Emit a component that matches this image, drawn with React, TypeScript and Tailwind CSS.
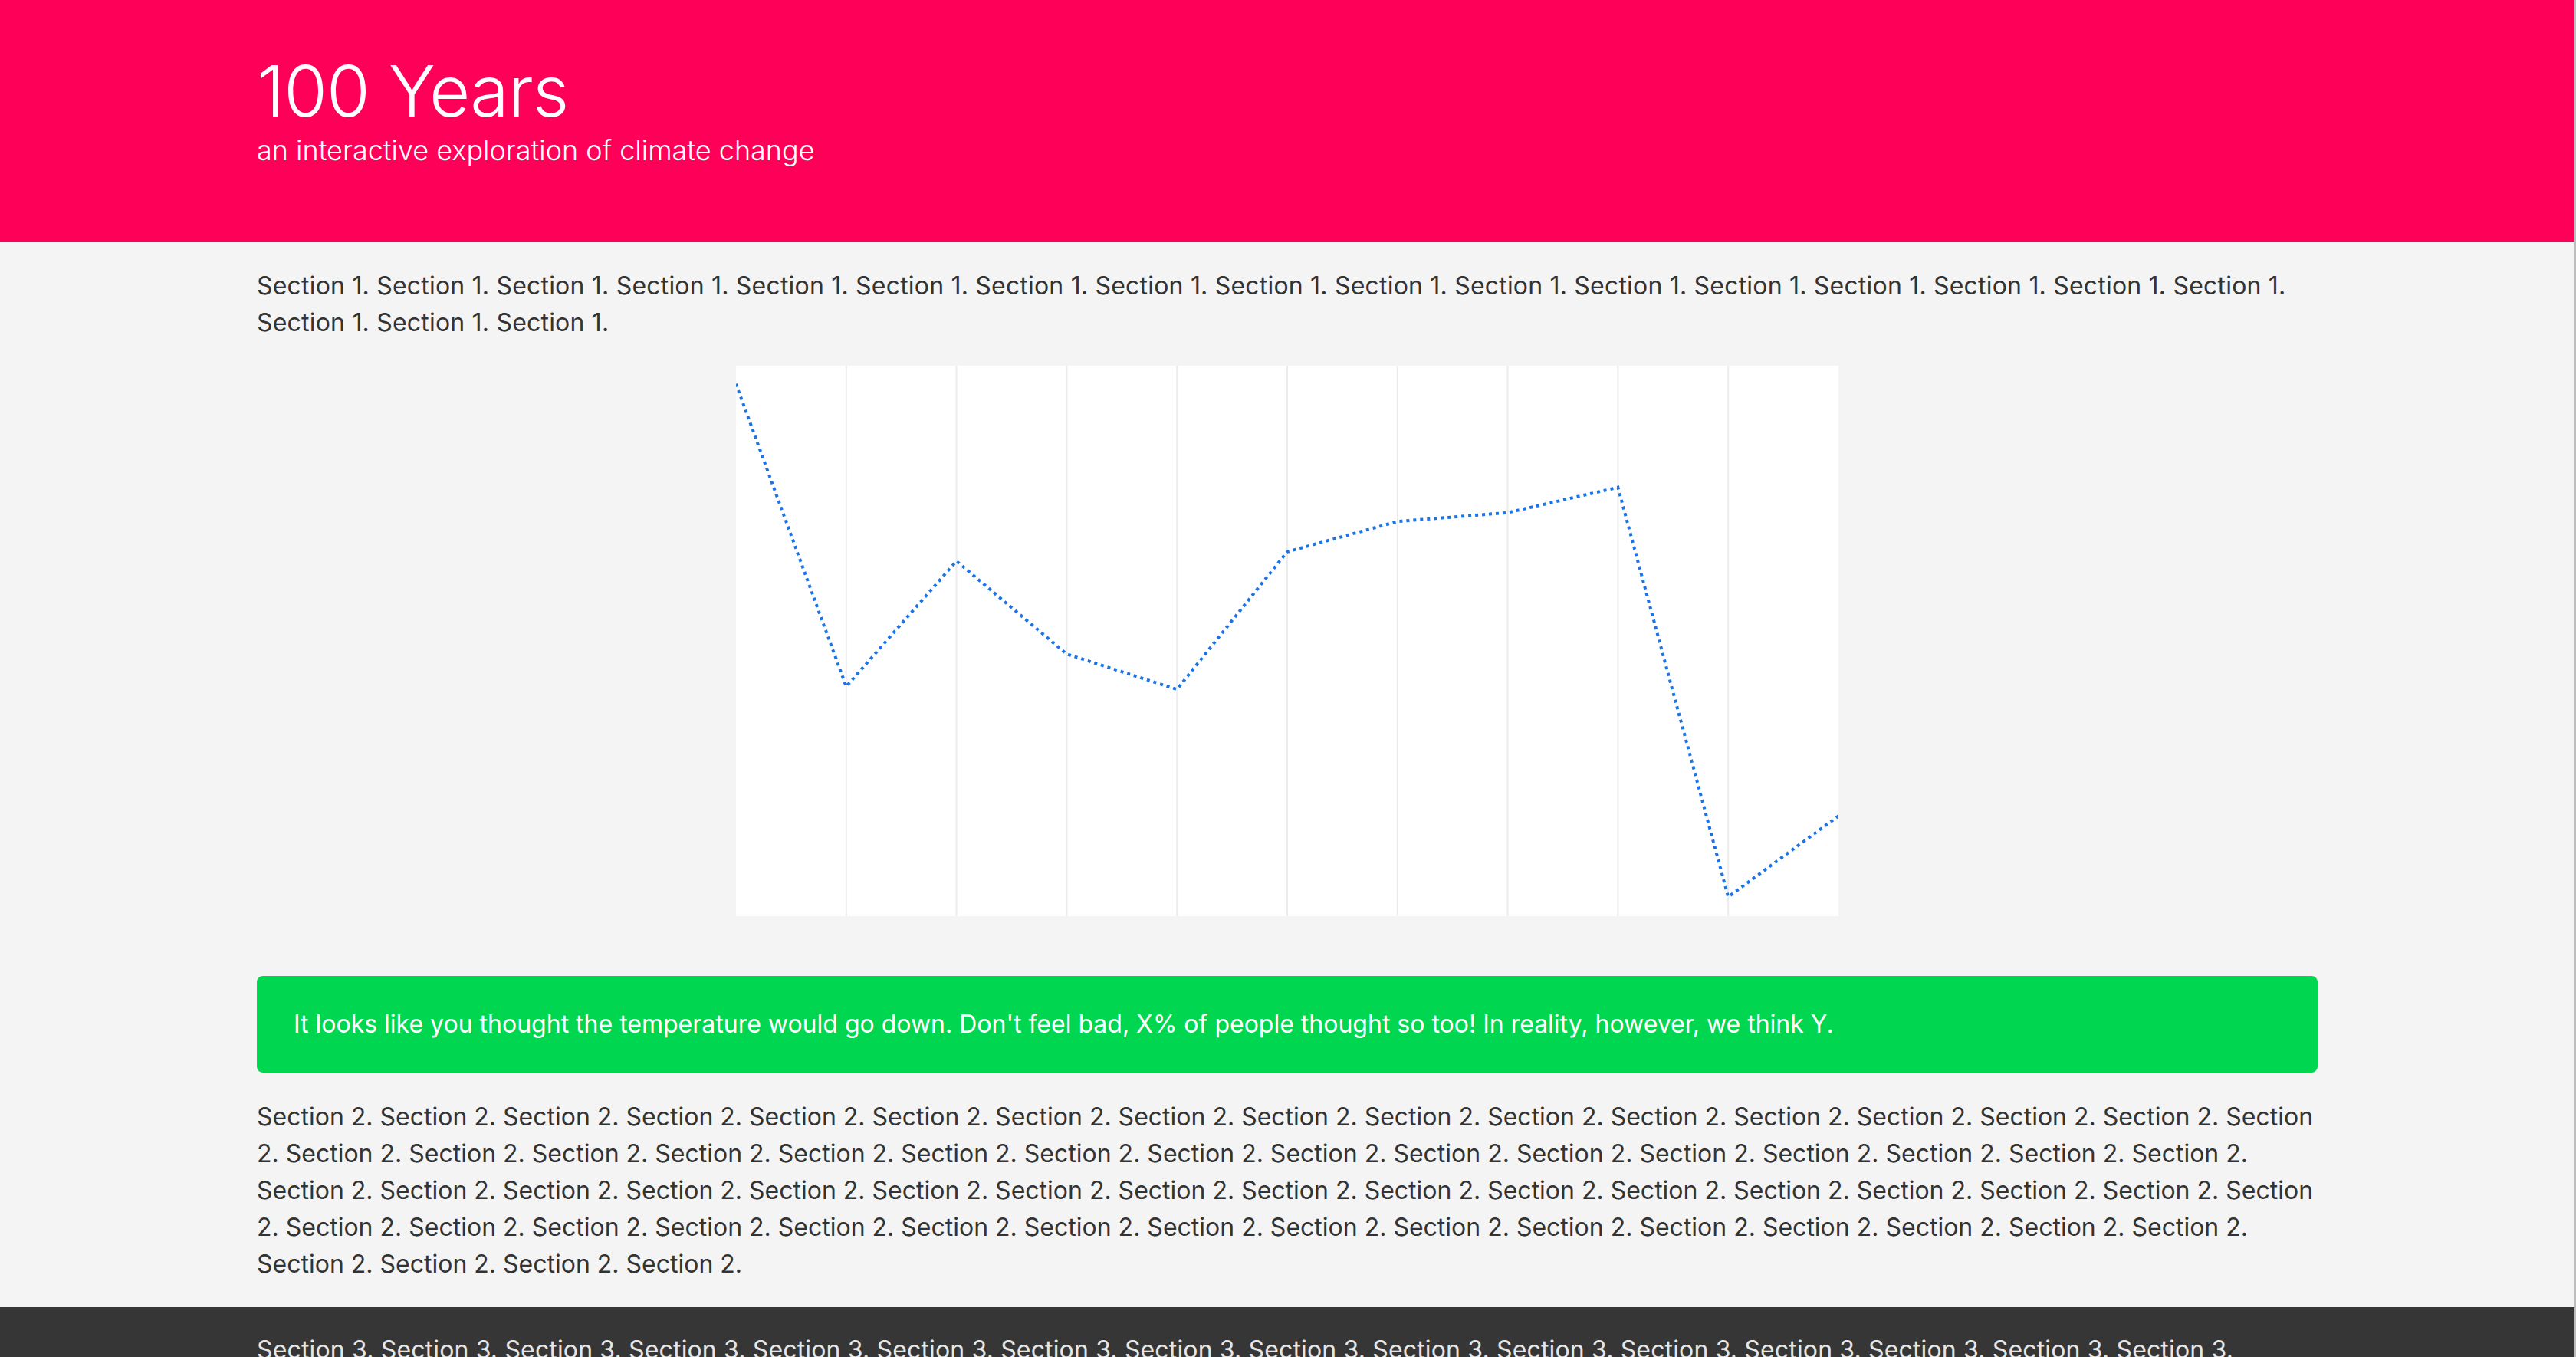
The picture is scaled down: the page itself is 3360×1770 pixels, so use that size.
const section1 = Array(20).fill("Section 1.").join(" ");
const section2 = Array(70).fill("Section 2.").join(" ");
const section3 = Array(48).fill("Section 3.").join(" ");

// chart values, 0 = top, 1 = bottom of the plot
const points = [0.033, 0.583, 0.355, 0.524, 0.588, 0.338, 0.283, 0.267, 0.221, 0.965, 0.818];

const W = 1438;
const H = 718;

function Chart() {
  const step = W / (points.length - 1);
  const line = points.map((p, i) => `${(i * step).toFixed(1)},${(p * H).toFixed(1)}`).join(" ");
  return (
    <div className="mx-auto mt-[32px] w-[1438px] h-[718px] bg-white">
      <svg width={W} height={H} viewBox={`0 0 ${W} ${H}`} className="block">
        {points.slice(1, -1).map((_, i) => (
          <line
            key={i}
            x1={(i + 1) * step}
            x2={(i + 1) * step}
            y1={0}
            y2={H}
            stroke="#ececec"
            strokeWidth={2}
          />
        ))}
        <polyline
          points={line}
          fill="none"
          stroke="#1a74e8"
          strokeWidth={4}
          strokeDasharray="4 5"
        />
      </svg>
    </div>
  );
}

export default function App() {
  return (
    <div className="min-h-screen bg-[#f4f4f4] border-r-2 border-[#bdbdbd] font-['Inter',sans-serif]">
      <header className="bg-[#ff0059] h-[316px]">
        <div className="w-[2688px] mx-auto pt-[73px] text-white">
          <h1 className="text-[92px] leading-[92px] font-light tracking-[-1px]">100 Years</h1>
          <p className="mt-[10px] text-[36px] leading-[43px] font-light">
            an interactive exploration of climate change
          </p>
        </div>
      </header>

      <main className="w-[2688px] mx-auto pt-[33px] pb-[32px] text-[#333] text-[32px] leading-[48px]">
        <p className="tracking-[0.2px]">{section1}</p>

        <Chart />

        <div className="mt-[78px] rounded-[8px] bg-[#00d64f] px-[48px] py-[39px] text-white">
          It looks like you thought the temperature would go down. Don't feel bad, X% of people
          thought so too! In reality, however, we think Y.
        </div>

        <p className="mt-[34px]">{section2}</p>
      </main>

      <section className="bg-[#363636] text-[#e6e6e6] text-[32px] leading-[48px]">
        <div className="w-[2688px] mx-auto pt-[32px] pb-[32px]">
          <p className="tracking-[0.15px]">{section3}</p>
        </div>
      </section>
    </div>
  );
}
